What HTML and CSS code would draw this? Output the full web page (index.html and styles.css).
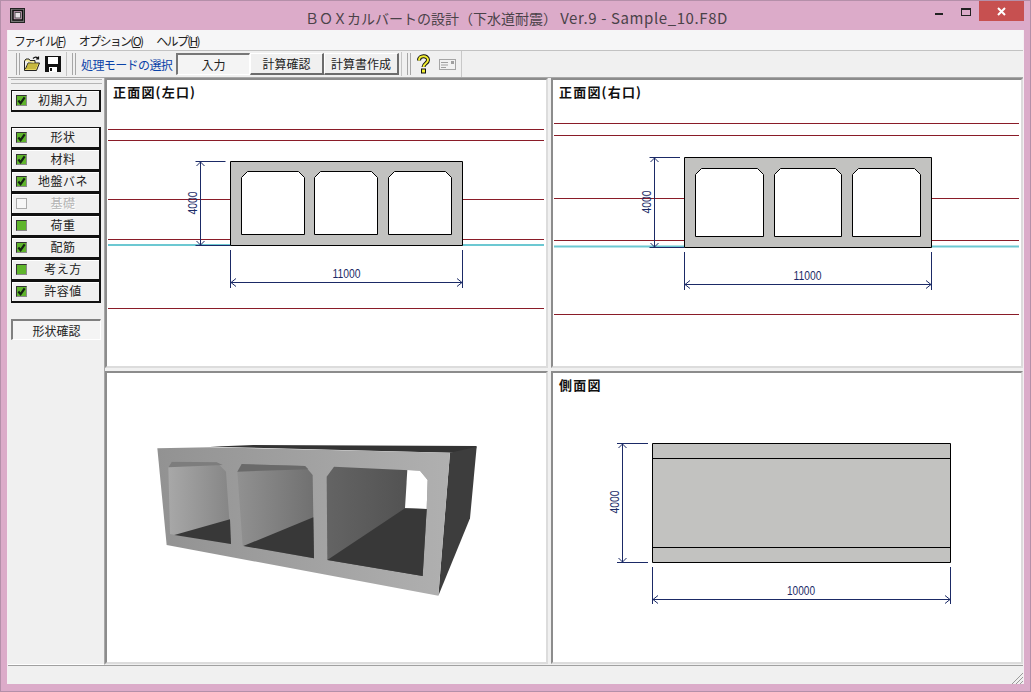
FILE: index.html
```html
<!DOCTYPE html>
<html lang="ja">
<head>
<meta charset="utf-8">
<title>BOXカルバートの設計</title>
<link rel="stylesheet" href="styles.css">
</head>
<body>
<div class="window">
  <header class="titlebar">
    <svg class="app-icon" viewBox="0 0 15 15" width="15" height="15">
      <rect x="0.5" y="0.5" width="14" height="14" fill="#777" stroke="#222"/>
      <rect x="3" y="2.5" width="9.5" height="9.5" fill="#ddb0cc" stroke="#111" stroke-width="1.5"/>
      <rect x="5" y="4.5" width="5.5" height="5.5" fill="#e8e0e6" stroke="#555"/>
    </svg>
    <div class="title">ＢＯＸカルバートの設計（下水道耐震） <span class="title-latin">Ver.9 - Sample_10.F8D</span></div>
    <div class="caption">
      <span class="cap-min"></span>
      <span class="cap-max"></span>
      <span class="cap-close">
        <svg viewBox="0 0 9 9" width="9" height="9"><path d="M1 1L8 8M8 1L1 8" stroke="#fff" stroke-width="2"/></svg>
      </span>
    </div>
  </header>

  <main class="client">
    <nav class="menubar">
      <span>ファイル(<u>F</u>)</span>
      <span>オプション(<u>O</u>)</span>
      <span>ヘルプ(<u>H</u>)</span>
    </nav>

    <div class="toolbar">
      <div class="tool-strip">
        <span class="grip"></span>
        <svg class="tool-icon" viewBox="0 0 18 18" width="18" height="18">
          <path d="M1.5 6V15.5H13.5L16.5 8H5L2.5 14" fill="#e8d860" stroke="#222"/>
          <path d="M1.5 6L3 4H6L7 5.5H12V8" fill="#f3ea9a" stroke="#222"/>
          <path d="M4.5 9H14.5M4 11H14M3.5 13H13" stroke="#a89a20" stroke-width="1" fill="none"/>
          <path d="M10 3.5Q13 0.5 15.5 4M15.5 1.5V4H13" stroke="#111" stroke-width="1.2" fill="none"/>
        </svg>
        <svg class="tool-icon save" viewBox="0 0 16 16" width="16" height="16">
          <path d="M0 0H16V16H0Z" fill="#111"/>
          <rect x="3" y="1" width="10" height="7" fill="#fff"/>
          <rect x="4" y="11" width="8" height="5" fill="#fff"/>
          <rect x="5" y="12" width="2" height="3" fill="#111"/>
        </svg>
        <span class="sep"></span>
        <span class="grip"></span>
        <span class="mode-label">処理モードの選択</span>
        <div class="mode-buttons">
          <button class="mode pressed">入力</button>
          <button class="mode">計算確認</button>
          <button class="mode wide">計算書作成</button>
        </div>
        <span class="sep"></span>
        <span class="grip"></span>
        <svg class="tool-icon help" viewBox="0 0 15 20" width="15" height="20">
          <path d="M3 6.5C3 1 12 1 12 6C12 9.5 7.5 9.5 7.5 13" fill="none" stroke="#111" stroke-width="4"/>
          <path d="M3 6.5C3 1 12 1 12 6C12 9.5 7.5 9.5 7.5 13" fill="none" stroke="#f2ee30" stroke-width="2"/>
          <rect x="5.5" y="15" width="4" height="4" fill="#f2ee30" stroke="#111"/>
        </svg>
        <svg class="tool-icon mail" viewBox="0 0 17 11" width="17" height="11">
          <rect x="0.5" y="0.5" width="16" height="10" fill="#f2f2f2" stroke="#a5a5a5"/>
          <path d="M2 3.5H9M2 6H9M2 8.5H7" stroke="#a0a0a0" fill="none"/>
          <rect x="12" y="2" width="3" height="3" fill="#a0a0a0"/>
        </svg>
      </div>
    </div>

    <div class="workspace">
      <aside class="sidebar">
        <div class="side-grip"></div>
        <button class="side-btn first"><span class="chk on"><svg viewBox="0 0 10 10"><path d="M1.5 5L4 8L8.500 1.500" fill="none" stroke="#142214" stroke-width="2.4"/></svg></span><span class="lbl">初期入力</span></button>
        <div class="side-group">
          <button class="side-btn"><span class="chk on"><svg viewBox="0 0 10 10"><path d="M1.5 5L4 8L8.500 1.500" fill="none" stroke="#142214" stroke-width="2.4"/></svg></span><span class="lbl">形状</span></button>
          <button class="side-btn"><span class="chk on"><svg viewBox="0 0 10 10"><path d="M1.5 5L4 8L8.500 1.500" fill="none" stroke="#142214" stroke-width="2.4"/></svg></span><span class="lbl">材料</span></button>
          <button class="side-btn"><span class="chk on"><svg viewBox="0 0 10 10"><path d="M1.5 5L4 8L8.500 1.500" fill="none" stroke="#142214" stroke-width="2.4"/></svg></span><span class="lbl">地盤バネ</span></button>
          <button class="side-btn disabled"><span class="chk off"></span><span class="lbl">基礎</span></button>
          <button class="side-btn"><span class="chk on"></span><span class="lbl">荷重</span></button>
          <button class="side-btn"><span class="chk on"><svg viewBox="0 0 10 10"><path d="M1.5 5L4 8L8.500 1.500" fill="none" stroke="#142214" stroke-width="2.4"/></svg></span><span class="lbl">配筋</span></button>
          <button class="side-btn"><span class="chk on"></span><span class="lbl">考え方</span></button>
          <button class="side-btn"><span class="chk on"><svg viewBox="0 0 10 10"><path d="M1.5 5L4 8L8.500 1.500" fill="none" stroke="#142214" stroke-width="2.4"/></svg></span><span class="lbl">許容値</span></button>
        </div>
        <button class="shape-check">形状確認</button>
      </aside>

      <div class="panels">
        <section class="panel">
          <h2 class="panel-title">正面図(左口)</h2>
          <svg class="drawing" viewBox="107 80 439 286">
            <g class="red">
              <path d="M108 129.5H544M108 140.5H544M108 199.5H231M462 199.5H544M108 239.5H231M462 239.5H544M108 308.5H544"/>
            </g>
            <path class="cyan" d="M108 245H231M462 245H544"/>
            <path class="body" d="M230.5 161.5H462.5V245.5H230.5Z"/>
            <path class="hole" d="M247.500 171.500H298.500L304.500 177.500V234.500H241.500V177.500Z"/>
            <path class="hole" d="M320.500 171.500H371.500L377.500 177.500V234.500H314.500V177.500Z"/>
            <path class="hole" d="M394.500 171.500H445.500L451.500 177.500V234.500H388.500V177.500Z"/>
            <path class="dim" d="M195.500 161.500H225.500M195.500 245.500H230M200.500 161.500V245.500M196.500 166L200.500 162L204.500 166M196.500 241L200.500 245L204.500 241"/>
            <path class="dim" d="M230.500 250V288M462.500 250V288M230.500 282.500H462.500M236 278.500L231 282.500L236 286.500M457 278.500L462 282.500L457 286.500"/>
            <text class="dim-text" text-anchor="middle" textLength="23" lengthAdjust="spacingAndGlyphs" transform="translate(197 203) rotate(-90)">4000</text>
            <text class="dim-text" x="346.500" y="278" text-anchor="middle" textLength="28" lengthAdjust="spacingAndGlyphs">11000</text>
          </svg>
        </section>

        <section class="panel">
          <h2 class="panel-title">正面図(右口)</h2>
          <svg class="drawing" viewBox="553 80 468 286">
            <g class="red">
              <path d="M554 123.500H1019M554 135.500H1019M554 198.500H685M931 198.500H1019M554 240.500H685M931 240.500H1019M554 314.500H1019"/>
            </g>
            <path class="cyan" d="M554 246.500H685M931 246.500H1019"/>
            <path class="body" d="M684.500 157.500H931.500V247.500H684.500Z"/>
            <path class="hole" d="M701.500 168.500H757.500L763.500 174.500V236.500H695.500V174.500Z"/>
            <path class="hole" d="M780.500 168.500H835.500L841.500 174.500V236.500H774.500V174.500Z"/>
            <path class="hole" d="M858.500 168.500H914.500L920.500 174.500V236.500H852.500V174.500Z"/>
            <path class="dim" d="M649.500 157.500H680M649.500 247.500H684M654.500 157.500V247.500M650.500 162L654.500 158L658.500 162M650.500 243L654.500 247L658.500 243"/>
            <path class="dim" d="M684.500 252V290M931.500 252V290M684.500 284.500H931.500M690 280.500L685 284.500L690 288.500M926 280.500L931 284.500L926 288.500"/>
            <text class="dim-text" text-anchor="middle" textLength="23" lengthAdjust="spacingAndGlyphs" transform="translate(651 202) rotate(-90)">4000</text>
            <text class="dim-text" x="807.500" y="280" text-anchor="middle" textLength="28" lengthAdjust="spacingAndGlyphs">11000</text>
          </svg>
        </section>

        <section class="panel">
          <svg class="drawing" viewBox="107 373 439 289">
            <defs>
              <linearGradient id="g-front" x1="0" x2="1" y1="0" y2="0"><stop offset="0" stop-color="#929292"/><stop offset="1" stop-color="#b0b0b0"/></linearGradient>
              <linearGradient id="g-w1" x1="0" x2="1" y1="0" y2="0"><stop offset="0" stop-color="#a8a8a8"/><stop offset="1" stop-color="#858585"/></linearGradient>
              <linearGradient id="g-w2" x1="0" x2="1" y1="0" y2="0"><stop offset="0" stop-color="#919191"/><stop offset="1" stop-color="#707070"/></linearGradient>
              <linearGradient id="g-w3" x1="0" x2="1" y1="0" y2="0"><stop offset="0" stop-color="#646464"/><stop offset="1" stop-color="#4e4e4e"/></linearGradient>
            </defs>
            <g transform="translate(130 430) scale(0.33333)">
              <path d="M240 50L370 45L1040 48L1035 68L960 68Z" fill="#333"/>
              <path d="M960 68L1040 50L1020 265L925 497Z" fill="#3d3d3d"/>
              <path d="M82 55L240 52L960 68L925 497L110 345Z" fill="url(#g-front)"/>
              <path d="M115 112L125 95L260 97L288 125L303 342L133 314L120 312Z" fill="url(#g-w1)"/>
              <path d="M115 112L125 95L260 97L278 105Z" fill="#7d7d7d"/>
              <path d="M133 315L300 268L303 342Z" fill="#383838"/>
              <path d="M322 125L335 102L525 108L548 135L552 385L338 347Z" fill="url(#g-w2)"/>
              <path d="M322 125L335 102L525 108L535 118Z" fill="#6a6a6a"/>
              <path d="M340 348L550 262L552 385Z" fill="#383838"/>
              <path d="M590 140L612 110L870 122L893 150L890 237L878 438L592 390Z" fill="url(#g-w3)"/>
              <path d="M832 120L870 122L893 150L890 237L825 235Z" fill="#fff"/>
              <path d="M592 390L825 235L890 237L878 438Z" fill="#383838"/>
            </g>
          </svg>
        </section>

        <section class="panel">
          <h2 class="panel-title">側面図</h2>
          <svg class="drawing" viewBox="553 373 468 289">
            <path class="body" d="M652.500 443.500H950.500V562.500H652.500Z"/>
            <path class="edge" d="M652.500 458.500H950.500M652.500 547.500H950.500"/>
            <path class="dim" d="M617 443.500H648M617 562.500H648M622.500 443.500V562.500M618.500 448L622.500 444L626.500 448M618.500 558L622.500 562L626.500 558"/>
            <path class="dim" d="M652.500 567V604M950.500 567V604M652.500 599.500H950.500M658 595.500L653 599.500L658 603.500M945 595.500L950 599.500L945 603.500"/>
            <text class="dim-text" text-anchor="middle" textLength="23" lengthAdjust="spacingAndGlyphs" transform="translate(619 502) rotate(-90)">4000</text>
            <text class="dim-text" x="801" y="595" text-anchor="middle" textLength="28" lengthAdjust="spacingAndGlyphs">10000</text>
          </svg>
        </section>
      </div>
    </div>

    <footer class="statusbar">
      <svg class="resize" viewBox="0 0 12 12" width="12" height="12">
        <path d="M1 12L12 1M5 12L12 5M9 12L12 9" stroke="#9a9a9a" fill="none"/>
      </svg>
    </footer>
  </main>
</div>
</body>
</html>
```

FILE: styles.css
```css
* { box-sizing: border-box; }

html, body {
  margin: 0;
  padding: 0;
  width: 1031px;
  height: 692px;
  overflow: hidden;
}

body {
  font-family: "Noto Sans CJK JP", "Liberation Sans", sans-serif;
  font-size: 12px;
  color: #222;
}

.window {
  width: 1031px;
  height: 692px;
  display: flex;
  flex-direction: column;
  background: #dcabc9;
  border: 1px solid #b48fa9;
  padding: 0 6px 7px 6px;
}

.titlebar {
  height: 29px;
  flex: none;
  display: flex;
  align-items: flex-start;
  position: relative;
}

.app-icon { margin: 7px 0 0 3px; flex: none; }

.title {
  position: absolute;
  left: 298px;
  top: 8px;
  font-size: 14px;
  line-height: 18px;
  color: #4a4248;
  white-space: nowrap;
}

.title-latin {
  font-size: 15px;
  letter-spacing: 0.6px;
}

.caption {
  margin-left: auto;
  display: flex;
  align-items: flex-start;
}

.cap-min {
  width: 8px;
  height: 2px;
  margin: 12px 18px 0 0;
  background: #222;
}

.cap-max {
  width: 10px;
  height: 8px;
  margin: 7px 8px 0 0;
  border: 1px solid #222;
  border-top-width: 2px;
}

.cap-close {
  width: 45px;
  height: 20px;
  background: #c75050;
  display: flex;
  align-items: center;
  justify-content: center;
}

.client {
  flex: 1;
  min-height: 0;
  display: flex;
  flex-direction: column;
  background: #f0f0f0;
  border: 1px solid #f6eef3;
  border-width: 0 1px;
}

.menubar {
  height: 21px;
  flex: none;
  display: flex;
  gap: 14px;
  align-items: center;
  padding: 0 0 0 6px;
  background: #f6f6f7;
  border-bottom: 1px solid #c2c2c2;
  font-size: 12px;
  color: #222;
}

.menubar span { white-space: nowrap; letter-spacing: -1.7px; }

.toolbar {
  height: 27px;
  flex: none;
  background: #f0f0f0;
  border-bottom: 1px solid #a8a8a8;
}

.tool-strip {
  width: 454px;
  height: 26px;
  display: flex;
  align-items: center;
  padding-left: 8px;
  border-right: 1px solid #c8c8c8;
}

.grip {
  width: 4px;
  height: 22px;
  flex: none;
  border-left: 1px solid #a6a6a6;
  border-right: 1px solid #a6a6a6;
}

.sep {
  width: 1px;
  height: 24px;
  flex: none;
  background: #c4c4c4;
}

.tool-icon { flex: none; margin-left: 3px; }
.tool-icon.save { margin-left: 4px; margin-right: 5px; }
.tool-icon.help { margin-left: 5px; }
.tool-icon.mail { margin-left: 8px; }

.sep + .grip { margin-left: 5px; }

.mode-label {
  margin-left: 5px;
  width: 92px;
  font-size: 12px;
  color: #0b43a8;
  white-space: nowrap;
  letter-spacing: -0.6px;
}

.mode-buttons {
  display: flex;
  margin: 0 2px 0 3px;
}

.mode {
  width: 74px;
  height: 22px;
  padding: 0;
  font: inherit;
  font-size: 12px;
  color: #222;
  background: #f0f0f0;
  border: 1px solid #fff;
  border-right: 2px solid #6c6c6c;
  border-bottom: 2px solid #6c6c6c;
}

.mode.pressed {
  background: #f4f4f4;
  border: 1px solid #fff;
  border-left: 2px solid #777;
  border-top: 2px solid #777;
}

.mode.wide { width: 75px; }

.workspace {
  flex: 1;
  min-height: 0;
  display: flex;
}

.sidebar {
  width: 97px;
  flex: none;
  display: flex;
  flex-direction: column;
  padding: 1px 2px 0 3px;
  background: #f0f0f0;
  border-bottom: 1px solid #fff;
  border-right: 1px solid #a8a8a8;
}

.side-grip {
  height: 5px;
  margin: 0 0 6px;
  border-top: 1px solid #b5b5b5;
  border-bottom: 1px solid #b5b5b5;
}

.side-btn {
  width: 90px;
  height: 22px;
  flex: none;
  display: flex;
  align-items: center;
  padding: 0 0 0 4px;
  font: inherit;
  font-size: 12px;
  color: #222;
  background: #f0f0f0;
  border: 1px solid #111;
  border-bottom-width: 2px;
  border-right-width: 2px;
  box-shadow: inset 1px 1px 0 #fff;
}

.side-group {
  display: flex;
  flex-direction: column;
  margin-top: 15px;
}

.chk {
  width: 11px;
  height: 11px;
  flex: none;
  display: block;
}

.chk svg { display: block; width: 9px; height: 9px; }

.chk.on {
  background: #5fb52c;
  border-top: 1px solid #333;
  border-left: 1px solid #333;
  border-right: 1px solid #8a8a8a;
  border-bottom: 1px solid #8a8a8a;
}

.chk.off {
  background: #f6f6f6;
  border: 1px solid #aaa;
}

.lbl {
  flex: 1;
  padding-bottom: 2px;
  text-align: center;
  letter-spacing: 0.5px;
}

.disabled .lbl {
  color: #b4b4b4;
  text-shadow: 1px 1px 0 #fff;
}

.shape-check {
  width: 90px;
  height: 21px;
  flex: none;
  margin-top: 16px;
  padding: 0;
  font: inherit;
  font-size: 12px;
  color: #222;
  background: #f4f4f4;
  border: 1px solid #fff;
  border-left: 2px solid #808080;
  border-top: 2px solid #808080;
}

.panels {
  flex: 1;
  min-width: 0;
  display: grid;
  grid-template-columns: 443px 1fr;
  grid-template-rows: 290px 1fr;
  column-gap: 3px;
  row-gap: 3px;
  padding: 0 0 1px 0;
  background: #f0f0f0;
}

.panel {
  position: relative;
  background: #fff;
  min-width: 0;
  min-height: 0;
  border-top: 2px solid #8c8c8c;
  border-left: 2px solid #8c8c8c;
  border-right: 2px solid #dcdcdc;
  border-bottom: 2px solid #dcdcdc;
}

.panel-title {
  position: absolute;
  left: 6px;
  top: 3px;
  margin: 0;
  font-size: 13px;
  line-height: 17px;
  letter-spacing: 1.2px;
  font-weight: 700;
  color: #111;
}

.drawing {
  display: block;
  width: 100%;
  height: 100%;
  fill: none;
}

.red {
  stroke: #8a1c28;
  stroke-width: 1;
  fill: none;
}

.cyan {
  stroke: #6cc8d2;
  stroke-width: 2;
  fill: none;
}

.body {
  fill: #c2c2c0;
  stroke: #000;
  stroke-width: 1;
}

.hole {
  fill: #fff;
  stroke: #000;
  stroke-width: 1;
}

.edge {
  stroke: #000;
  stroke-width: 1;
  fill: none;
}

.dim {
  stroke: #1b2a66;
  stroke-width: 1;
  fill: none;
}

.dim-text {
  font-family: "Liberation Sans", sans-serif;
  font-size: 12px;
  fill: #1b2a66;
}

.statusbar {
  height: 19px;
  flex: none;
  position: relative;
  background: #f0f0f0;
  border-top: 1px solid #a0a0a0;
}

.resize {
  position: absolute;
  right: 0;
  bottom: 0;
}
```
